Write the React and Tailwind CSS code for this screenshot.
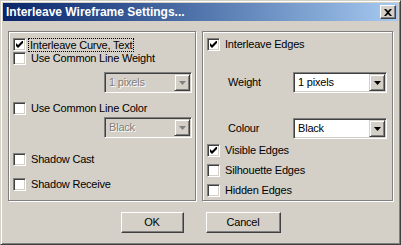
import React from 'react';

// Win2000-style "Interleave Wireframe Settings..." dialog

const Check = ({ checked }) => (
  <span className="w-[13px] h-[13px] shrink-0 bg-white border border-t-[#808080] border-l-[#808080] border-r-white border-b-white shadow-[inset_1px_1px_0_#404040,inset_-1px_-1px_0_#d4d0c8] flex items-center justify-center">
    {checked && (
      <svg width="7" height="7" viewBox="0 0 7 7">
        <polygon points="0,2 2,4 6,0 7,0 7,2 2,7 0,5" fill="#000" />
      </svg>
    )}
  </span>
);

const Row = ({ checked, label, focus, className = '' }) => (
  <div className={`flex items-center gap-[5px] h-[13px] ${className}`}>
    <Check checked={checked} />
    <span
      className={
        focus
          ? 'leading-[12px] px-[1px] -ml-[2px] outline outline-1 outline-dotted outline-black'
          : 'leading-[13px]'
      }
    >
      {label}
    </span>
  </div>
);

const Arrow = ({ disabled }) => (
  <span className="w-[16px] h-[17px] shrink-0 bg-[#d4d0c8] border border-t-[#d4d0c8] border-l-[#d4d0c8] border-r-[#404040] border-b-[#404040] shadow-[inset_1px_1px_0_#fff,inset_-1px_-1px_0_#808080] flex items-center justify-center">
    <svg width="7" height="4" viewBox="0 0 7 4">
      <polygon points="0,0 7,0 3.5,4" fill={disabled ? '#808080' : '#000'} />
    </svg>
  </span>
);

const Select = ({ value, disabled, className = '' }) => (
  <div
    className={`flex items-center h-[21px] border border-t-[#808080] border-l-[#808080] border-r-white border-b-white shadow-[inset_1px_1px_0_#404040,inset_-1px_-1px_0_#d4d0c8] p-[1px] ${
      disabled ? 'bg-[#d4d0c8]' : 'bg-white'
    } ${className}`}
  >
    <span
      className={`flex-1 pl-[3px] ${
        disabled ? 'text-[#808080] [text-shadow:1px_1px_0_#fff]' : 'text-black'
      }`}
    >
      {value}
    </span>
    <Arrow disabled={disabled} />
  </div>
);

const Button = ({ label, className = '' }) => (
  <button className={`h-[21px] bg-[#d4d0c8] border border-t-white border-l-white border-r-[#404040] border-b-[#404040] shadow-[inset_-1px_-1px_0_#808080] text-black ${className}`}>
    {label}
  </button>
);

export default function App() {
  return (
    <div className="w-[401px] h-[245px] bg-[#d4d0c8] border border-t-[#d4d0c8] border-l-[#d4d0c8] border-r-[#404040] border-b-[#404040] shadow-[inset_1px_1px_0_#fff,inset_-1px_-1px_0_#808080] p-[2px] font-['Liberation_Sans',Arial,sans-serif] text-[11px] tracking-[-0.2px] text-black select-none">
      {/* Title bar */}
      <div className="h-[18px] flex items-center justify-between pl-[3px] pr-[2px] bg-gradient-to-r from-[#0a246a] to-[#a6caf0]">
        <span className="text-white font-bold text-[12px] tracking-normal leading-none">Interleave Wireframe Settings...</span>
        <span className="w-[16px] h-[14px] bg-[#d4d0c8] border border-t-white border-l-white border-r-[#404040] border-b-[#404040] shadow-[inset_-1px_-1px_0_#808080] flex items-center justify-center">
          <svg width="8" height="7" viewBox="0 0 8 7">
            <path d="M0 0h2l2 2l2-2h2l-3 3.5l3 3.5h-2l-2-2l-2 2h-2l3-3.5z" fill="#000" />
          </svg>
        </span>
      </div>

      <div className="px-[5px] pt-[10px]">
        <div className="flex gap-[6px] h-[170px]">
          {/* Left group */}
          <div className="w-[189px] border border-[#808080] shadow-[1px_1px_0_#fff,inset_1px_1px_0_#fff] flex flex-col pl-[4px]">
            <Row checked focus label="Interleave Curve, Text" className="mt-[6px]" />
            <Row label="Use Common Line Weight" className="mt-[1px]" />
            <Select value="1 pixels" disabled className="w-[88px] self-end mr-[3px] mt-[7px]" />
            <Row label="Use Common Line Color" className="mt-[9px]" />
            <Select value="Black" disabled className="w-[88px] self-end mr-[3px] mt-[2px]" />
            <Row label="Shadow Cast" className="mt-[15px]" />
            <Row label="Shadow Receive" className="mt-[12px]" />
          </div>

          {/* Right group */}
          <div className="w-[192px] border border-[#808080] shadow-[1px_1px_0_#fff,inset_1px_1px_0_#fff] flex flex-col pl-[4px]">
            <Row checked label="Interleave Edges" className="mt-[6px]" />
            <div className="flex items-center mt-[21px] pl-[21px]">
              <span className="w-[65px]">Weight</span>
              <Select value="1 pixels" className="w-[94px]" />
            </div>
            <div className="flex items-center mt-[25px] pl-[21px]">
              <span className="w-[65px]">Colour</span>
              <Select value="Black" className="w-[94px]" />
            </div>
            <Row checked label="Visible Edges" className="mt-[5px]" />
            <Row label="Silhouette Edges" className="mt-[7px]" />
            <Row label="Hidden Edges" className="mt-[7px]" />
          </div>
        </div>

        {/* Buttons */}
        <div className="flex justify-center gap-[22px] mt-[11px]">
          <Button label="OK" className="w-[63px]" />
          <Button label="Cancel" className="w-[75px]" />
        </div>
      </div>
    </div>
  );
}
